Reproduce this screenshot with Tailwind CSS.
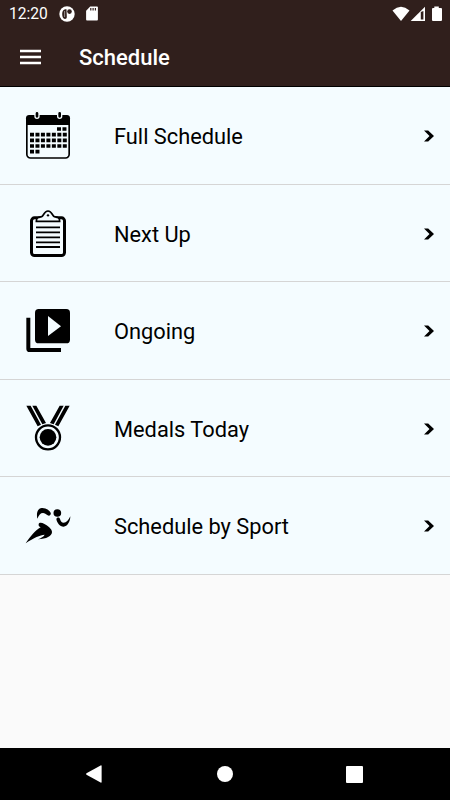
<!DOCTYPE html>
<html lang="en">
<head>
    <meta charset="UTF-8">
    <meta name="viewport" content="width=device-width, initial-scale=1.0">
    <title>Schedule</title>
    <script src="https://cdn.jsdelivr.net/npm/@tailwindcss/browser@4"></script>
</head>
<body class="h-[800px] w-[450px] overflow-hidden flex flex-col bg-[#fafafa] font-['Roboto',sans-serif] text-black">
    <header class="h-[87px] shrink-0 bg-[#301f1c] text-white border-b border-black">
        <!-- Status bar -->
        <div class="h-[27px] flex items-center pl-[9px] pr-2">
            <span class="w-[50px] pt-0.5 text-[15.6px] leading-none">12:20</span>
            <svg class="w-4 h-4" viewBox="0 0 16 16">
                <circle cx="8" cy="8" r="7.700" fill="#fff"/>
                <path d="M7.500 3.200C4.300 3.200 3.200 5.200 3.200 8c0 2.700.9 5 2.700 5 1.300 0 1.900-.8 1.900-2z" fill="#301f1c"/>
                <path d="M5.600 5v6" stroke="#fff" stroke-width=".5"/>
                <circle cx="10.500" cy="5.600" r="2.300" fill="#301f1c"/>
            </svg>
            <svg class="w-3 h-[15px] ml-[11px]" viewBox="0 0 12 15">
                <path d="M4.200.5H11q.9 0 .9.900v12.200q0 .9-.9.900H1q-.9 0-.9-.9V4.700z" fill="#fff"/>
                <path d="M4.800 2v2.500M7.100 2v2.500M9.400 2v2.500" stroke="#301f1c" stroke-width="1.200"/>
            </svg>
            <svg class="w-[50px] h-4 ml-auto" viewBox="0 0 50 16">
                <path d="M.5 4.400Q9-2.800 17.500 4.400L9 15z" fill="#fff"/>
                <path d="M33 .8V15H18.700z" fill="#fff"/>
                <path d="M28.800 6v7.500h2.600V5z" fill="#301f1c"/>
                <path d="M42.300.5h4.500V2H49q1 0 1 1v11q0 1-1 1h-8q-1 0-1-1V3q0-1 1-1h1.300z" fill="#fff"/>
            </svg>
        </div>
        <!-- Toolbar -->
        <div class="h-[59px] flex items-center pl-5">
            <svg class="w-[21px] h-4" viewBox="0 0 21 16">
                <path d="M0 2h21M0 8h21M0 14h21" stroke="#fff" stroke-width="2.300"/>
            </svg>
            <h1 class="ml-[38px] mt-[3px] text-[22px] font-medium leading-none">Schedule</h1>
        </div>
    </header>

    <main class="flex-1">
        <a class="h-[97.5px] flex items-center px-[15px] bg-[#f4fcff] border-b border-[#d5d5d5]">
            <svg class="w-[70px] h-[70px]" viewBox="0 0 210 210">
                <rect x="35.500" y="48" width="127" height="126" rx="11" fill="#f4fcff" stroke="#000" stroke-width="5"/>
                <path d="M33 75V55q0-10 10-10h112q10 0 10 10v20z"/>
                <rect x="60" y="34" width="12" height="21" rx="6" stroke="#f4fcff" stroke-width="4"/>
                <rect x="128" y="34" width="12" height="21" rx="6" stroke="#f4fcff" stroke-width="4"/>
                <path d="M126 87h30M45 104h111M45 121h111M45 138h111M45 155h30" stroke="#000" stroke-width="11" stroke-dasharray="12 4.400"/>
            </svg>
            <span class="ml-[29px] pt-[3px] text-[21.8px] leading-none">Full Schedule</span>
            <svg class="ml-auto mt-0.5 w-3 h-3" viewBox="0 0 12 12"><path d="M1 .5h4.200L11 6l-5.800 5.500H1L6.500 6z"/></svg>
        </a>
        <a class="h-[97.5px] flex items-center px-[15px] bg-[#f4fcff] border-b border-[#d5d5d5]">
            <svg class="w-[70px] h-[70px]" viewBox="0 -7 210 210">
                <rect x="49.500" y="52.500" width="99" height="113" rx="9" fill="none" stroke="#000" stroke-width="9"/>
                <path d="M64 63c0-12 7-12 16-14 6-2 7-17 19-17s13 15 19 17c9 2 16 2 16 14z" fill="#f4fcff" stroke="#000" stroke-width="5"/>
                <circle cx="99" cy="45" r="3.500"/>
                <path d="M63 81h72M63 96h72M63 111h72M63 126h72M63 140h72" stroke="#000" stroke-width="5.500"/>
            </svg>
            <span class="ml-[29px] pt-1 text-[21.8px] leading-none">Next Up</span>
            <svg class="ml-auto mt-0.5 w-3 h-3" viewBox="0 0 12 12"><path d="M1 .5h4.200L11 6l-5.800 5.500H1L6.500 6z"/></svg>
        </a>
        <a class="h-[97.5px] flex items-center px-[15px] bg-[#f4fcff] border-b border-[#d5d5d5]">
            <svg class="w-[70px] h-[70px]" viewBox="0 0 210 210">
                <rect x="60" y="42" width="105" height="103" rx="11"/>
                <path d="M99 63v60l39-29z" fill="#f4fcff"/>
                <path d="M34 68h12v91h92v12H44q-10 0-10-10z"/>
            </svg>
            <span class="ml-[29px] pt-[3px] text-[21.8px] leading-none">Ongoing</span>
            <svg class="ml-auto mt-0.5 w-3 h-3" viewBox="0 0 12 12"><path d="M1 .5h4.200L11 6l-5.800 5.500H1L6.500 6z"/></svg>
        </a>
        <a class="h-[97.5px] flex items-center px-[15px] bg-[#f4fcff] border-b border-[#d5d5d5]">
            <svg class="w-[70px] h-[70px]" viewBox="0 0 210 210">
                <path d="M34 38h13l31 57-10 5zM52 38h12l29 52-11 4zM164 38h-13l-31 57 10 5zM146 38h-12l-29 52 11 4z"/>
                <circle cx="99" cy="133" r="36" fill="#f4fcff" stroke="#000" stroke-width="7"/>
                <circle cx="99" cy="133" r="25"/>
            </svg>
            <span class="ml-[29px] pt-1 text-[21.8px] leading-none">Medals Today</span>
            <svg class="ml-auto mt-0.5 w-3 h-3" viewBox="0 0 12 12"><path d="M1 .5h4.200L11 6l-5.800 5.500H1L6.500 6z"/></svg>
        </a>
        <a class="h-[97.5px] flex items-center px-[15px] bg-[#f4fcff] border-b border-[#d5d5d5]">
            <svg class="w-[70px] h-[70px]" viewBox="0 0 210 210">
                <circle cx="127" cy="69" r="11.500"/>
                <path d="M67 86C63 68 70 54 80 54c10-1 23 6 27 14 2 6-3 11-9 8-5-3-9-7-14-7-8 0-12 6-17 17z"/>
                <path d="M124 87c3-6 9-5 11 0 2 7 5 11 11 11 8 0 14-7 20-19 0 15-9 31-20 31-12 0-20-12-22-23z"/>
                <path d="M71 102c1-5 10-4 16-1 10 5 24 15 24 25 0 12-17 21-42 22 9-4 17-8 20-14-14 2-32 8-57 26 14-21 29-39 45-48-5-2-7-5-6-10z"/>
            </svg>
            <span class="ml-[29px] pt-[3px] text-[21.8px] leading-none">Schedule by Sport</span>
            <svg class="ml-auto mt-0.5 w-3 h-3" viewBox="0 0 12 12"><path d="M1 .5h4.200L11 6l-5.800 5.500H1L6.500 6z"/></svg>
        </a>
    </main>

    <!-- System navigation -->
    <nav class="h-[52px] shrink-0 flex items-center justify-between bg-black pl-[85px] pr-[87px]">
        <svg class="w-[18px] h-[18px]" viewBox="0 0 18 18"><path d="M1.500 8.300 15.600.4q1-.4 1 .6v16q0 1-1 .6L1.500 9.700q-1-.7 0-1.400z" fill="#fff"/></svg>
        <div class="size-4 rounded-full bg-white"></div>
        <div class="size-[17px] rounded-[1px] bg-white"></div>
    </nav>
</body>
</html>
